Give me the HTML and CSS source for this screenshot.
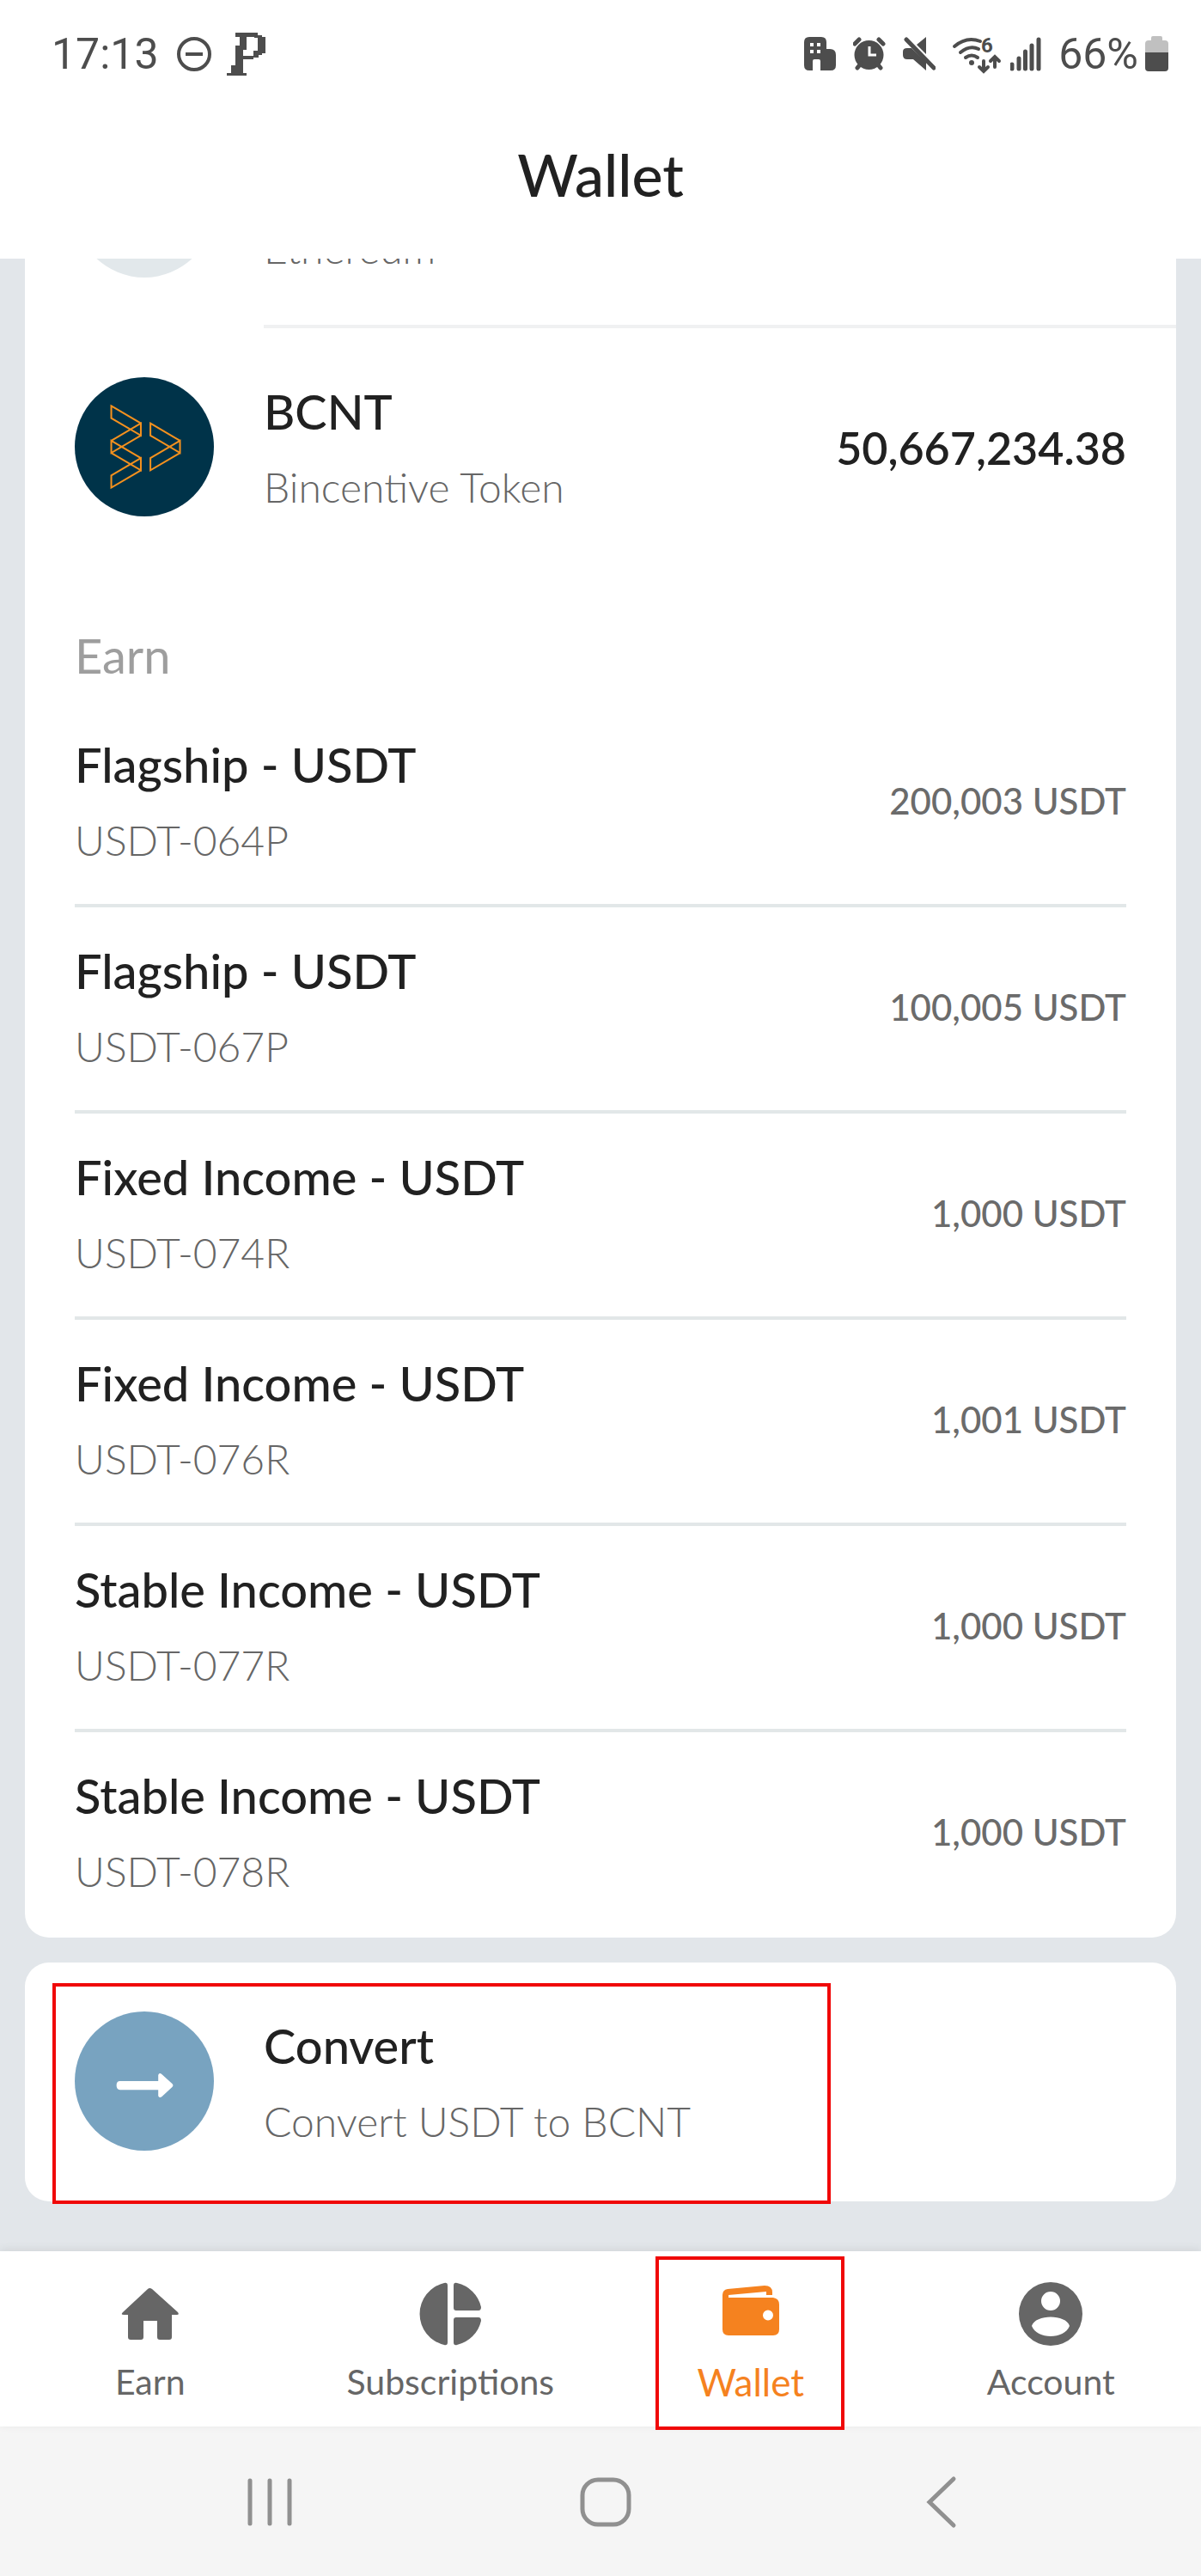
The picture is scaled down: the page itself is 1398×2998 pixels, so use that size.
FILE: index.html
```html
<!DOCTYPE html>
<html lang="en">
<head>
    <meta charset="UTF-8">
    <title>Wallet</title>
    <meta name="viewport" content="width=device-width, initial-scale=1.0">
    <link rel="stylesheet" href="styles.css">
</head>
<body>
    <header>
        <div class="status-bar">
            <span class="clock">17:13</span>
            <svg width="42" height="42" viewBox="205 42 42 42" aria-hidden="true">
                <circle cx="226" cy="63" r="18" fill="none" stroke="#4d4d4d" stroke-width="4"/>
                <rect x="216" y="61" width="20" height="4"/>
            </svg>
            <svg width="46" height="52" viewBox="264 37 46 52" shape-rendering="crispEdges" aria-hidden="true">
                <rect x="274" y="38" width="26" height="5"/>
                <rect x="279" y="38" width="8" height="20"/>
                <rect x="274" y="53" width="9" height="27"/>
                <rect x="269" y="76" width="9" height="11"/>
                <rect x="278" y="66" width="5" height="20"/>
                <rect x="264" y="85" width="23" height="3"/>
                <rect x="296" y="41" width="9" height="3"/>
                <rect x="300" y="43" width="9" height="19"/>
                <rect x="300" y="60" width="5" height="4"/>
                <rect x="295" y="59" width="6" height="8"/>
                <rect x="283" y="65" width="12" height="4"/>
            </svg>
            <div class="status-icons">
                <svg width="37" height="40" viewBox="57 43 37 40" aria-hidden="true">
                    <path fill-rule="evenodd" d="M63 43H77Q83 43 83 49V57H87Q94 57 94 64V76Q94 82 88 82H76V71Q76 69 74 69H69Q67 69 67 71V82H63Q57 82 57 76V49Q57 43 63 43ZM64 50V54H68V50ZM72 50V54H76V50ZM64 58V62H68V58ZM72 58V62H76V58Z"/>
                </svg>
                <svg width="38" height="40" viewBox="115 43 38 40" aria-hidden="true">
                    <circle cx="133.500" cy="64" r="17"/>
                    <path class="line" d="M117 51L122 46M145 46L150 51M120 79L124 74M143 74L147 79"/>
                    <path d="M134 54V64H142" fill="none" stroke="#fff" stroke-width="3"/>
                </svg>
                <svg width="38" height="40" viewBox="173 43 38 40" aria-hidden="true">
                    <path d="M189 52L200 43V63ZM178 56H183L200 72V82L185 69H178Q173 69 173 64V60Q173 56 178 56Z"/>
                    <path class="line" d="M177 46L209 79"/>
                </svg>
                <svg class="wifi" width="55" height="41" viewBox="230 42 55 41" aria-hidden="true">
                    <path class="line thin" d="M232 53Q246 41 262 47M239 60Q250 51 260 56M245 66Q252 61 259 66"/>
                    <circle cx="252" cy="72" r="3"/>
                    <text x="263" y="60">6</text>
                    <path class="line thin" d="M266 70V81M261 77L266 82L271 77M279 77V66M274 70L279 65L284 70"/>
                </svg>
                <svg class="signal" width="36" height="40" viewBox="298 42 36 40" aria-hidden="true">
                    <path class="line" d="M300 74V79M308 67V79M315.500 59V79M323 52V79M331 45V79"/>
                </svg>
                <span class="battery">
                    <span>66%</span>
                    <svg width="27" height="42" viewBox="453 42 27 42" aria-hidden="true">
                        <path fill="#c0c0c0" d="M453 62V51Q453 47 457 47H460V44Q460 42 462 42H471Q473 42 473 44V47H476Q480 47 480 51V62Z"/>
                        <path d="M453 61H480V79Q480 83 476 83H457Q453 83 453 79Z"/>
                    </svg>
                </span>
            </div>
        </div>
        <h1>Wallet</h1>
    </header>

    <main>
        <section class="card assets">
            <div class="asset">
                <span class="coin coin-eth"></span>
                <div class="asset-body divided">
                    <p class="sub">Ethereum</p>
                </div>
            </div>
            <div class="asset">
                <svg class="coin" viewBox="0 0 160 160" aria-hidden="true">
                    <circle cx="80" cy="80" r="80" fill="#003349"/>
                    <g fill="none" stroke="#f5911e" stroke-width="2">
                        <path d="M42 33L76 53V67L42 47ZM76 53L42 73V87L76 67ZM42 73L76 93V107L42 87ZM76 93L42 113V127L76 107Z"/>
                        <path d="M87 53L121 73V87L87 67ZM121 73L87 93V107L121 87Z"/>
                    </g>
                </svg>
                <div class="asset-body">
                    <div class="text">
                        <p class="name">BCNT</p>
                        <p class="sub">Bincentive Token</p>
                    </div>
                    <span class="balance">50,667,234.38</span>
                </div>
            </div>

            <h2>Earn</h2>
            <ul class="earn-list">
                <li>
                    <div class="text">
                        <p class="name">Flagship - USDT</p>
                        <p class="sub">USDT-064P</p>
                    </div>
                    <span class="amount">200,003 USDT</span>
                </li>
                <li>
                    <div class="text">
                        <p class="name">Flagship - USDT</p>
                        <p class="sub">USDT-067P</p>
                    </div>
                    <span class="amount">100,005 USDT</span>
                </li>
                <li>
                    <div class="text">
                        <p class="name">Fixed Income - USDT</p>
                        <p class="sub">USDT-074R</p>
                    </div>
                    <span class="amount">1,000 USDT</span>
                </li>
                <li>
                    <div class="text">
                        <p class="name">Fixed Income - USDT</p>
                        <p class="sub">USDT-076R</p>
                    </div>
                    <span class="amount">1,001 USDT</span>
                </li>
                <li>
                    <div class="text">
                        <p class="name">Stable Income - USDT</p>
                        <p class="sub">USDT-077R</p>
                    </div>
                    <span class="amount">1,000 USDT</span>
                </li>
                <li>
                    <div class="text">
                        <p class="name">Stable Income - USDT</p>
                        <p class="sub">USDT-078R</p>
                    </div>
                    <span class="amount">1,000 USDT</span>
                </li>
            </ul>
        </section>

        <a class="card convert" href="#convert">
            <svg class="coin" viewBox="0 0 160 160" aria-hidden="true">
                <circle cx="80" cy="80" r="80" fill="#78a3c0"/>
                <path fill="#fff" d="M52 80H96V73Q97 70 100 72L112 83Q114 85 112 87L100 98Q97 100 96 97V90H52Q48 90 48 85Q48 80 52 80Z"/>
            </svg>
            <div class="text">
                <p class="name">Convert</p>
                <p class="sub">Convert USDT to BCNT</p>
            </div>
            <span class="highlight"></span>
        </a>
    </main>

    <nav>
        <a href="#earn">
            <svg viewBox="0 0 88 88" aria-hidden="true">
                <path d="M41 15Q43 13 46 15L76 42Q78 45 75 45H69V71Q69 74 66 74H55Q52 74 52 71V52H36V71Q36 74 33 74H21Q18 74 18 71V45H13Q9 45 12 42Z"/>
            </svg>
            Earn
        </a>
        <a href="#subscriptions">
            <svg viewBox="0 0 88 88" aria-hidden="true">
                <path d="M37 8Q41 7 41 11V77Q41 81 37 80A37 37 0 0 1 37 8ZM48 11Q48 7 52 8A37 37 0 0 1 80 36Q80 40 77 40H51Q48 40 48 37ZM51 48H77Q80 48 80 52A37 37 0 0 1 52 80Q48 81 48 77V51Q48 48 51 48Z"/>
            </svg>
            Subscriptions
        </a>
        <a class="active" href="#wallet">
            <svg viewBox="0 0 88 88" aria-hidden="true">
                <path fill-rule="evenodd" d="M11 62V22Q11 16 17 15L60 11Q69 11 69 19V22H62V18L18 22V25H70Q77 26 77 33V62Q77 69 70 69H18Q11 69 11 62ZM64 39.500A6 6 0 1 0 64 51.500A6 6 0 1 0 64 39.500Z"/>
            </svg>
            Wallet
            <span class="highlight"></span>
        </a>
        <a href="#account">
            <svg viewBox="0 0 88 88" aria-hidden="true">
                <path fill-rule="evenodd" d="M44 7A37 37 0 1 0 44 81A37 37 0 1 0 44 7ZM44 18A11 11 0 1 1 44 40A11 11 0 1 1 44 18ZM22 58C26 44 62 44 66 58C60 74 28 74 22 58Z"/>
            </svg>
            Account
        </a>
    </nav>

    <footer class="system-bar">
        <button type="button" aria-label="Recent apps">
            <svg width="64" height="64" viewBox="0 0 64 64"><path d="M9 7V57M32 7V57M55 7V57"/></svg>
        </button>
        <button type="button" aria-label="Home">
            <svg width="64" height="64" viewBox="0 0 64 64"><rect x="5" y="6" width="54" height="52" rx="18"/></svg>
        </button>
        <button type="button" aria-label="Back">
            <svg width="64" height="64" viewBox="0 0 64 64"><path d="M46 5L18 32L46 59"/></svg>
        </button>
    </footer>
</body>
</html>
```
FILE: styles.css
```css
/* General styling */
* {
    box-sizing: border-box;
}
body {
    margin: 0;
    min-height: 100vh;
    display: flex;
    flex-direction: column;
    background: #e2e6ea;
    font-family: Lato, sans-serif;
    color: #212121;
}
h1, h2, p, ul {
    margin: 0;
    padding: 0;
}
ul {
    list-style: none;
}
a {
    color: inherit;
    text-decoration: none;
}
svg {
    flex: none;
}

/* Header */
header {
    background: #fff;
    padding-bottom: 58px;
}
.status-bar {
    display: flex;
    align-items: center;
    height: 126px;
    padding: 0 38px 0 60px;
    font-family: Roboto, sans-serif;
    font-size: 50px;
    color: #4d4d4d;
    fill: #4d4d4d;
}
.clock {
    margin-right: 20px;
}
.status-bar > svg + svg {
    margin-left: 17px;
}
.status-icons {
    display: flex;
    align-items: center;
    gap: 20px;
    margin-left: auto;
}
.wifi {
    overflow: visible;
    font-size: 24px;
    font-weight: bold;
}
.signal {
    margin-left: -8px;
}
.battery {
    display: flex;
    align-items: center;
    gap: 8px;
}
.line {
    fill: none;
    stroke: #4d4d4d;
    stroke-width: 5;
    stroke-linecap: round;
}
.thin {
    stroke-width: 4;
}
h1 {
    text-align: center;
    font-size: 68px;
    line-height: 80px;
    font-weight: 500;
    padding-top: 37px;
}

/* Scrolled content, the top of the list sits under the header */
main {
    flex: 1;
    overflow: hidden;
    padding: 0 29px 58px;
}
.card {
    display: block;
    background: #fff;
    border-radius: 28px;
}
.assets {
    margin-top: -197px;
}
.asset {
    display: flex;
    align-items: stretch;
    padding-left: 58px;
}
.coin {
    flex: none;
    width: 162px;
    height: 162px;
    margin: 57px 58px 59px 0;
}
.coin-eth {
    border-radius: 50%;
    background: #e2e8eb;
}
.asset-body {
    flex: 1;
    display: flex;
    align-items: center;
    justify-content: space-between;
    padding-right: 58px;
}
.divided {
    align-items: flex-end;
    padding-bottom: 61px;
    border-bottom: 4px solid #f0f1f2;
}
.name {
    font-size: 56px;
    line-height: 64px;
    font-weight: 500;
}
.sub {
    margin-top: 28px;
    font-size: 48px;
    line-height: 56px;
    font-weight: 300;
    color: #666;
}
.balance {
    font-size: 52px;
    font-weight: 600;
}

/* Earn positions */
h2 {
    margin: 71px 58px 21px;
    font-size: 56px;
    line-height: 64px;
    font-weight: 400;
    color: #9e9e9e;
}
.earn-list {
    padding: 0 58px 3px;
}
.earn-list li {
    display: flex;
    align-items: center;
    justify-content: space-between;
    padding: 42px 0 46px;
    border-bottom: 4px solid #e2e7e8;
}
.earn-list li:last-child {
    border-bottom: none;
}
.amount {
    font-size: 42px;
    font-weight: 500;
    color: #6b6b6b;
}

/* Convert */
.convert {
    position: relative;
    display: flex;
    align-items: center;
    margin-top: 29px;
    padding-left: 58px;
}
.highlight {
    position: absolute;
    border: 4px solid #f00808;
}
.convert .highlight {
    inset: 24px 30% -3px 32px;
}

/* Bottom navigation */
nav {
    position: relative;
    display: flex;
    background: #fff;
    box-shadow: 0 -2px 10px rgba(0, 0, 0, 0.08);
}
nav a {
    position: relative;
    flex: 1;
    display: flex;
    flex-direction: column;
    align-items: center;
    gap: 11px;
    padding: 29px 0 28px;
    font-size: 41px;
    line-height: 48px;
    color: #666;
}
nav svg {
    width: 88px;
    height: 88px;
    fill: currentColor;
}
nav .active {
    font-size: 44px;
    color: #f5821f;
}
nav .highlight {
    inset: 6px 66px -4px 64px;
}

/* System bar */
.system-bar {
    display: flex;
    background: #f5f5f5;
    padding: 56px 107px 55px 118px;
}
.system-bar button {
    flex: 1;
    border: none;
    padding: 0;
    background: none;
    cursor: pointer;
}
.system-bar svg {
    display: block;
    margin: 0 auto;
    fill: none;
    stroke: #909090;
    stroke-width: 5;
    stroke-linecap: round;
}
```
